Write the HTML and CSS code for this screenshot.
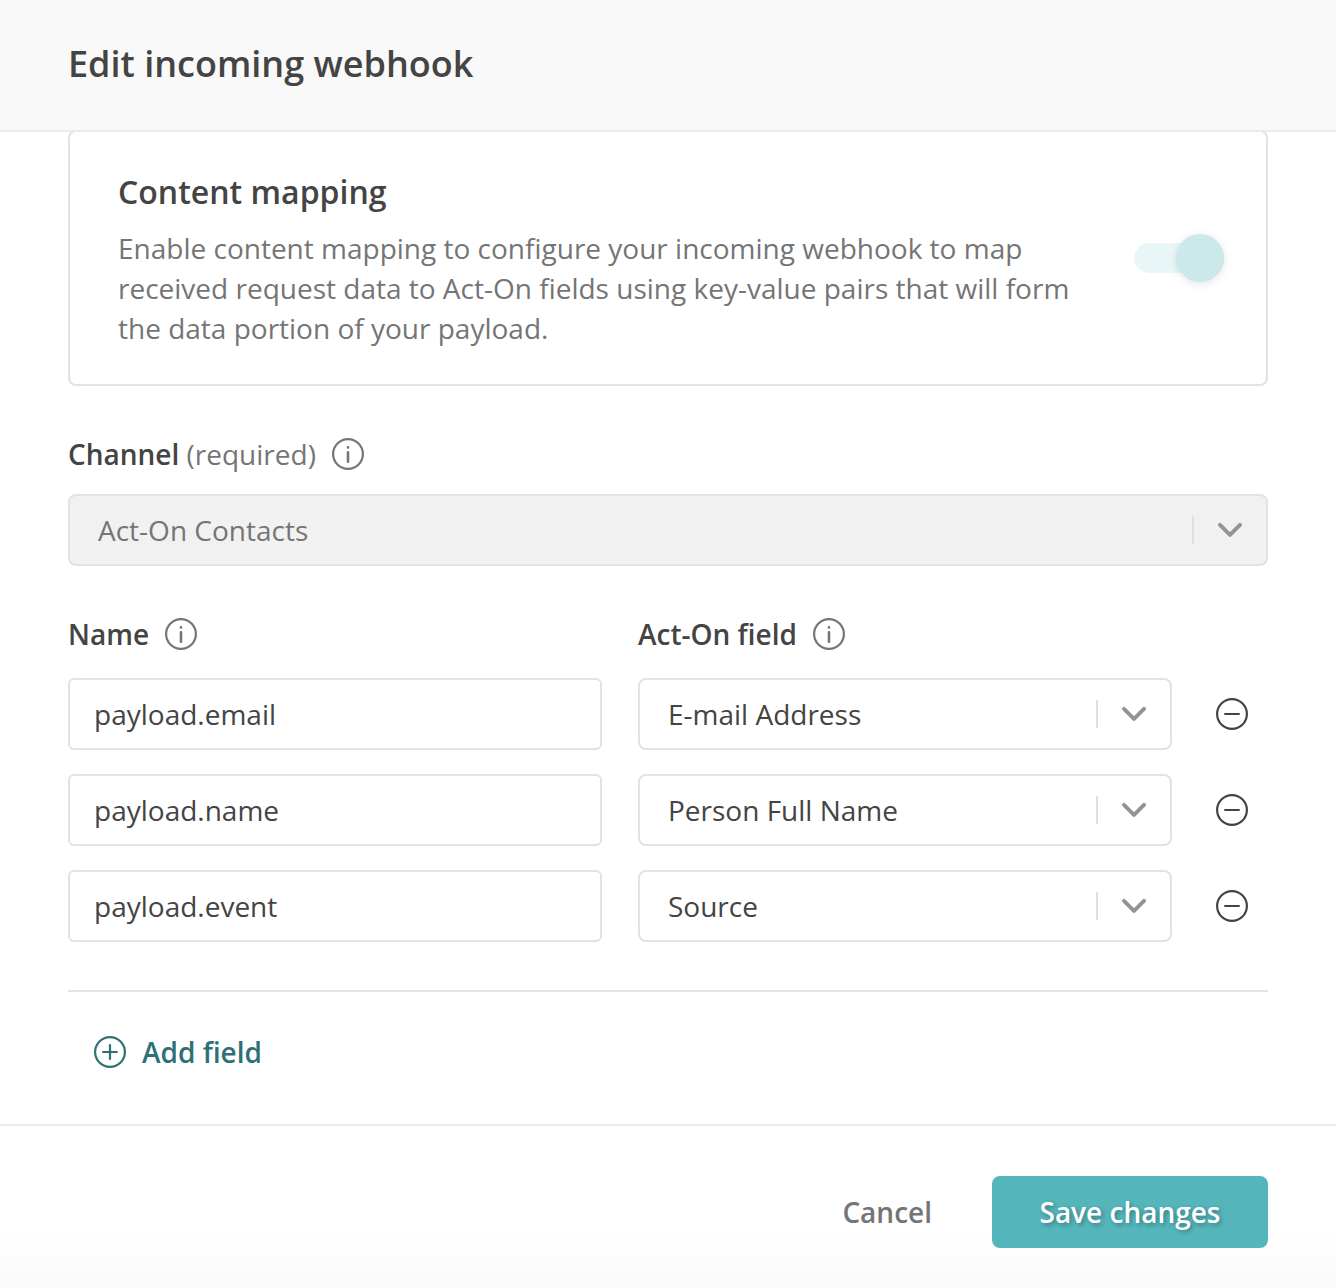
FILE: index.html
```html
<!DOCTYPE html>
<html lang="en">
<head>
<meta charset="utf-8">
<title>Edit incoming webhook</title>
<link rel="stylesheet" href="styles.css">
</head>
<body>
<svg class="sprite" aria-hidden="true">
  <symbol id="info" viewBox="0 0 32 32"><circle cx="16" cy="16" r="14.9" fill="none" stroke="currentColor" stroke-width="2.2"/><circle cx="16" cy="9.4" r="1.3" fill="currentColor"/><path d="M16 14.2v9.6" fill="none" stroke="currentColor" stroke-width="2.6" stroke-linecap="round"/></symbol>
  <symbol id="minus" viewBox="0 0 32 32"><circle cx="16" cy="16" r="14.9" fill="none" stroke="currentColor" stroke-width="2.2"/><path d="M9.1 16h13.8" fill="none" stroke="currentColor" stroke-width="2.2" stroke-linecap="round"/></symbol>
  <symbol id="plus" viewBox="0 0 32 32"><circle cx="16" cy="16" r="14.9" fill="none" stroke="currentColor" stroke-width="2.2"/><path d="M9.1 16h13.8M16 9.1v13.8" fill="none" stroke="currentColor" stroke-width="2.2" stroke-linecap="round"/></symbol>
  <symbol id="chevron" viewBox="0 0 26 16"><path d="M3 2.9l10 9.9L23 2.9" fill="none" stroke="currentColor" stroke-width="4" stroke-linecap="round" stroke-linejoin="round"/></symbol>
</svg>
<div class="dialog">
  <header class="header"><h1 class="title">Edit incoming webhook</h1></header>
  <main class="content">
    <section class="card">
      <div class="card-text">
        <h2 class="card-title">Content mapping</h2>
        <p class="card-desc">Enable content mapping to configure your incoming webhook to map received request data to Act-On fields using key-value pairs that will form the data portion of your payload.</p>
      </div>
      <div class="toggle"><span class="knob"></span></div>
    </section>

    <div class="label channel-label"><span>Channel <span class="hint">(required)</span></span><svg class="icon"><use href="#info"/></svg></div>
    <div class="select disabled"><span class="value">Act-On Contacts</span><span class="separator"></span><svg class="chevron"><use href="#chevron"/></svg></div>

    <div class="fields">
      <div class="label"><span>Name</span><svg class="icon"><use href="#info"/></svg></div>
      <div class="label"><span>Act-On field</span><svg class="icon"><use href="#info"/></svg></div>
      <span></span>

      <input class="input" value="payload.email">
      <div class="select"><span class="value">E-mail Address</span><span class="separator"></span><svg class="chevron"><use href="#chevron"/></svg></div>
      <svg class="icon remove"><use href="#minus"/></svg>

      <input class="input" value="payload.name">
      <div class="select"><span class="value">Person Full Name</span><span class="separator"></span><svg class="chevron"><use href="#chevron"/></svg></div>
      <svg class="icon remove"><use href="#minus"/></svg>

      <input class="input" value="payload.event">
      <div class="select"><span class="value">Source</span><span class="separator"></span><svg class="chevron"><use href="#chevron"/></svg></div>
      <svg class="icon remove"><use href="#minus"/></svg>
    </div>

    <div class="add-row"><button class="add"><svg class="icon"><use href="#plus"/></svg><span>Add field</span></button></div>
  </main>
  <footer class="footer">
    <button class="cancel">Cancel</button>
    <button class="save">Save changes</button>
  </footer>
</div>
</body>
</html>
```

FILE: styles.css
```css
* { box-sizing: border-box; }
body {
  margin: 0;
  background: #fff;
  color: #444;
  font: 400 28px/40px "Open Sans", sans-serif;
}
h1, h2, p { margin: 0; }
button {
  border: 0;
  padding: 0;
  background: none;
  font: inherit;
  font-weight: 600;
  white-space: nowrap;
}
.sprite { display: none; }
.dialog { display: flex; flex-direction: column; height: 1288px; overflow: hidden; }

.header {
  z-index: 1;
  flex: none;
  height: 132px;
  padding: 40px 68px 0;
  background: #f9f9f9;
  border-bottom: 2px solid #ebebeb;
}
.title { font-size: 36px; line-height: 48px; font-weight: 600; }

.content { flex: none; height: 992px; padding: 0 68px; }
.card {
  display: flex;
  justify-content: space-between;
  height: 256px;
  margin-top: -2px;
  padding: 38px 42px 0 48px;
  border: 2px solid #e2e2e2;
  border-radius: 8px;
}
.card-text { width: 960px; }
.card-title { font-size: 32px; line-height: 44px; font-weight: 600; }
.card-desc { margin-top: 14px; color: #757575; }
.toggle {
  display: flex;
  align-items: center;
  justify-content: flex-end;
  width: 90px;
  height: 30px;
  margin-top: 73px;
  border-radius: 15px;
  background: #e8f6f7;
}
.knob {
  width: 48px;
  height: 48px;
  border-radius: 50%;
  background: #cbe9ea;
  box-shadow: 0 2px 8px rgba(0, 0, 0, .1);
}

.icon { display: block; flex: none; width: 32px; height: 32px; overflow: visible; }
.label { display: flex; align-items: center; gap: 16px; height: 40px; font-weight: 600; }
.label .icon { color: #757575; }
.hint { color: #757575; font-weight: 400; }
.channel-label { margin: 48px 0 20px; }

.select {
  display: flex;
  align-items: center;
  height: 72px;
  padding: 0 23px 0 28px;
  border: 2px solid #e2e2e2;
  border-radius: 8px;
  background: #fff;
}
.select.disabled { background: #f1f1f1; color: #757575; }
.value { flex: 1; }
.separator { width: 2px; height: 28px; margin-right: 23px; background: #e0e0e0; }
.chevron { width: 26px; height: 16px; color: #949494; }

.fields {
  display: grid;
  grid-template-columns: 534px 534px 32px;
  grid-template-rows: 40px repeat(3, 72px);
  column-gap: 36px;
  row-gap: 24px;
  align-items: center;
  padding: 48px 0;
  border-bottom: 2px solid #e2e2e2;
}
.input {
  width: 100%;
  height: 72px;
  padding: 0 24px;
  border: 2px solid #e2e2e2;
  border-radius: 6px;
  background: #fff;
  color: #444;
  font: inherit;
}
.remove { margin-left: 8px; color: #444; }

.add-row { padding: 40px 26px 0; }
.add { display: flex; align-items: center; gap: 16px; color: #2f7074; }

.footer {
  flex: 1;
  display: flex;
  justify-content: flex-end;
  align-items: flex-start;
  gap: 60px;
  padding: 50px 68px 0;
  border-top: 2px solid #ebebeb;
  background: linear-gradient(#fff 65%, #fafafa);
}
.cancel { height: 72px; color: #757575; }
.save {
  width: 276px;
  height: 72px;
  border-radius: 8px;
  background: #54b5bb;
  color: #fff;
  text-shadow: 2px 2px 4px rgba(0, 0, 0, .3);
}
```
